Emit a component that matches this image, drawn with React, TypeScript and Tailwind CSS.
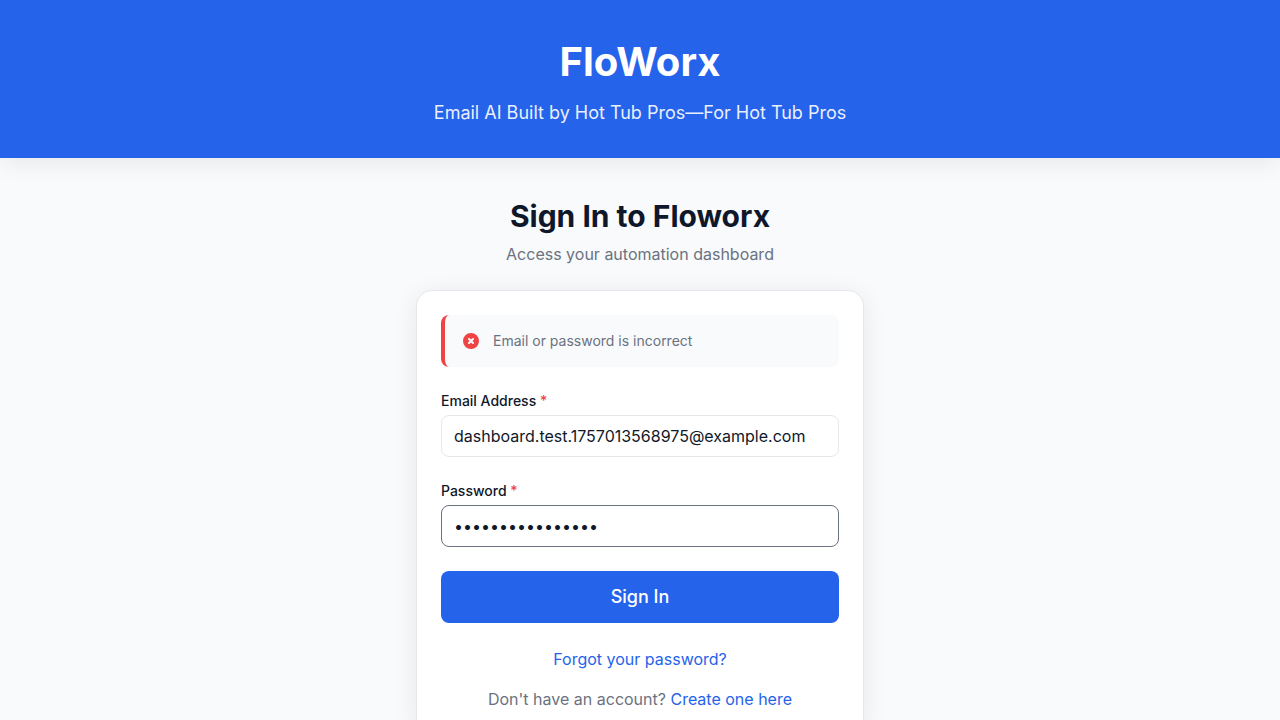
import { useState, type InputHTMLAttributes } from "react";

type FieldProps = InputHTMLAttributes<HTMLInputElement> & {
  id: string;
  label: string;
  active?: boolean;
};

function Field({ id, label, active = false, ...rest }: FieldProps) {
  return (
    <div className="flex flex-col gap-1">
      <label htmlFor={id} className="text-sm font-medium text-[#0f172a]">
        {label} <span className="text-[#ef4444]">*</span>
      </label>
      <input
        id={id}
        required
        className={`w-full rounded-lg border bg-white px-3 py-2 text-base text-[#0f172a] outline-none focus:border-[#6b7280] ${
          active ? "border-[#6b7280]" : "border-[#e5e7eb]"
        }`}
        {...rest}
      />
    </div>
  );
}

function ErrorAlert({ message }: { message: string }) {
  return (
    <div
      role="alert"
      className="flex items-center gap-3 rounded-lg border-l-4 border-[#ef4444] bg-[#f8fafc] p-4"
    >
      <svg className="size-5 shrink-0 text-[#ef4444]" viewBox="0 0 20 20" fill="currentColor" aria-hidden="true">
        <path
          fillRule="evenodd"
          clipRule="evenodd"
          d="M10 18a8 8 0 100-16 8 8 0 000 16zM8.707 7.293a1 1 0 00-1.414 1.414L8.586 10l-1.293 1.293a1 1 0 101.414 1.414L10 11.414l1.293 1.293a1 1 0 001.414-1.414L11.414 10l1.293-1.293a1 1 0 00-1.414-1.414L10 8.586 8.707 7.293z"
        />
      </svg>
      <p className="text-sm text-[#6b7280]">{message}</p>
    </div>
  );
}

export default function App() {
  const [email, setEmail] = useState("dashboard.test.1757013568975@example.com");
  const [password, setPassword] = useState("TestPassword123!");

  return (
    <div className="min-h-screen bg-[#f8fafc] font-['Inter',sans-serif] text-[#0f172a]">
      <header className="bg-[#2563eb] px-4 py-8 text-center text-white shadow-[0_4px_24px_rgba(0,0,0,0.08)]">
        <h1 className="text-[40px] leading-[60px] font-bold">FloWorx</h1>
        <p className="mt-2 text-lg leading-[26px] opacity-90">
          Email AI Built by Hot Tub Pros—For Hot Tub Pros
        </p>
      </header>

      <main className="mx-auto w-full max-w-md py-10">
        <div className="mb-6 text-center">
          <h2 className="text-3xl font-bold">Sign In to Floworx</h2>
          <p className="mt-2 text-base text-[#6b7280]">Access your automation dashboard</p>
        </div>

        <section className="rounded-2xl border border-[#e5e7eb] bg-white p-6 shadow-[0_4px_24px_rgba(0,0,0,0.08)]">
          <form className="flex flex-col gap-6" onSubmit={(e) => e.preventDefault()}>
            <ErrorAlert message="Email or password is incorrect" />
            <Field
              id="email"
              label="Email Address"
              type="email"
              value={email}
              onChange={(e) => setEmail(e.target.value)}
            />
            <Field
              id="password"
              label="Password"
              type="password"
              active
              value={password}
              onChange={(e) => setPassword(e.target.value)}
            />
            <button
              type="submit"
              className="w-full rounded-lg bg-[#2563eb] px-6 py-3 text-lg font-medium text-white"
            >
              Sign In
            </button>
          </form>

          <div className="mt-6 flex flex-col gap-4 text-center text-base">
            <p>
              <a href="#forgot-password" className="text-[#2563eb]">
                Forgot your password?
              </a>
            </p>
            <p className="text-[#6b7280]">
              Don't have an account?{" "}
              <a href="#register" className="text-[#2563eb]">
                Create one here
              </a>
            </p>
          </div>
        </section>
      </main>
    </div>
  );
}
